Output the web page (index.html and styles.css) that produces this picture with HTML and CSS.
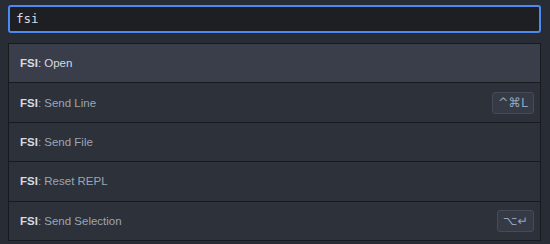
FILE: index.html
```html
<!DOCTYPE html>
<html lang="en">
<head>
    <meta charset="UTF-8">
    <title>Command Palette</title>
    <link rel="stylesheet" href="styles.css">
</head>
<body>

<div class="palette">
    <div class="search">fsi</div>
    <ul class="commands">
        <li class="command selected">
            <span class="name"><b>FSI</b>: Open</span>
        </li>
        <li class="command">
            <span class="name"><b>FSI</b>: Send Line</span>
            <kbd class="key">^⌘L</kbd>
        </li>
        <li class="command">
            <span class="name"><b>FSI</b>: Send File</span>
        </li>
        <li class="command">
            <span class="name"><b>FSI</b>: Reset REPL</span>
        </li>
        <li class="command">
            <span class="name"><b>FSI</b>: Send Selection</span>
            <kbd class="key">⌥↵</kbd>
        </li>
    </ul>
</div>

</body>
</html>
```

FILE: styles.css
```css
body {
    margin: 0;
    background-color: #282c34;
    font-family: "Liberation Sans", Arial, sans-serif;
    overflow: hidden;
}
.palette {
    padding: 5px 9px 0 8px;
}
.search {
    height: 24px;
    padding: 0 6px;
    border: 2px solid #4d8af0;
    border-radius: 3px;
    background-color: #1d1f23;
    color: #d7dae0;
    font-family: "DejaVu Sans Mono", monospace;
    font-size: 12.5px;
    line-height: 24px;
}
.commands {
    list-style: none;
    margin: 10px 0 0 0;
    padding: 0;
    border: 1px solid #181a1f;
    border-bottom: none;
    background-color: #2c313a;
}
.command {
    display: flex;
    align-items: center;
    justify-content: space-between;
    height: 38.4px;
    padding: 0 6px 0 11px;
    border-bottom: 1px solid #181a1f;
    font-size: 11.5px;
    color: #9da5b4;
}
.command b {
    color: #d7dae0;
}
.selected {
    background-color: #3a3e4a;
    color: #d7dae0;
}
.key {
    display: inline-block;
    height: 20px;
    padding: 0 5px;
    border: 1px solid #464b57;
    border-radius: 3px;
    background-color: #353a44;
    color: #8fa4c0;
    font-family: "DejaVu Sans", sans-serif;
    font-size: 12.5px;
    line-height: 20px;
}
```
